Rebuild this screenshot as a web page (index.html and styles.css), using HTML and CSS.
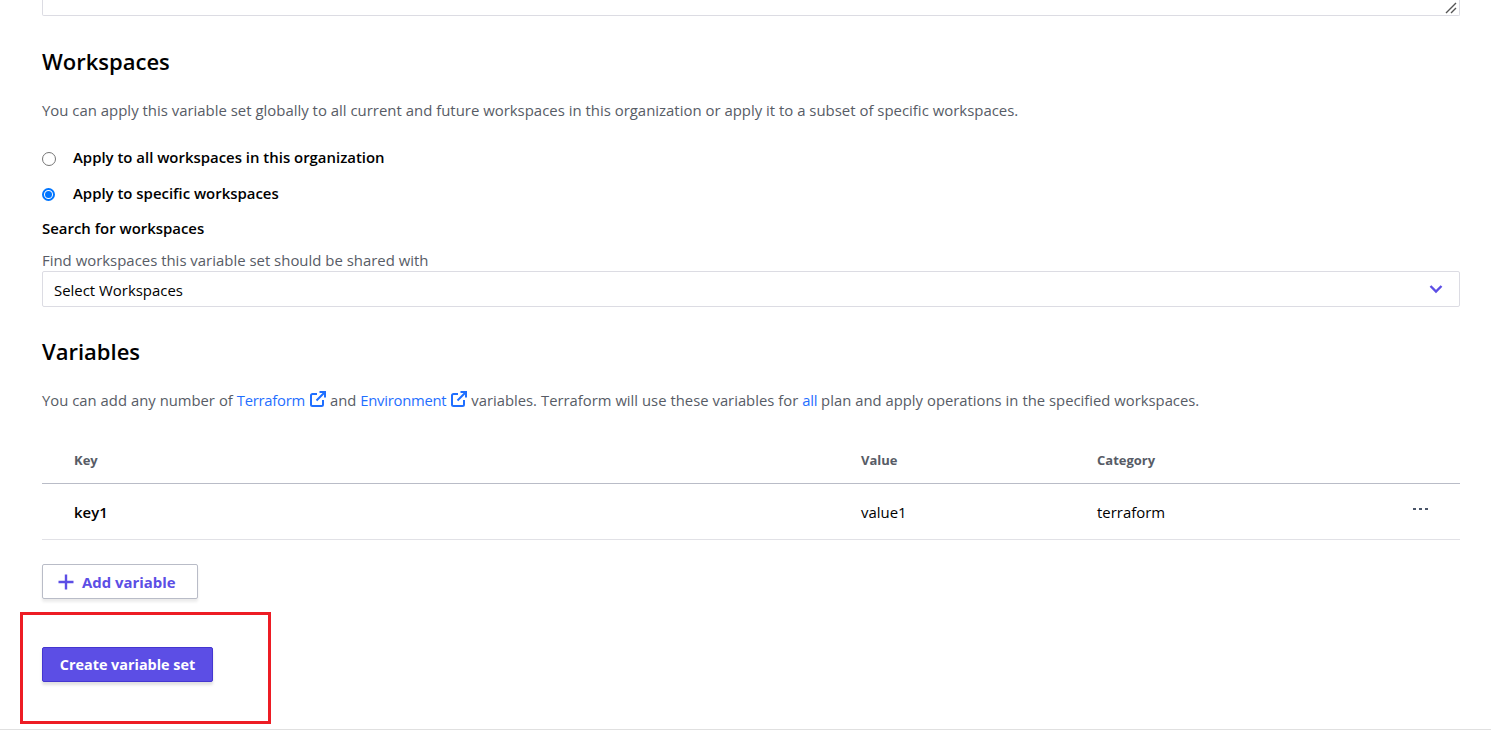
FILE: index.html
```html
<!DOCTYPE html>
<html lang="en">
<head>
    <meta charset="UTF-8">
    <title>Create variable set</title>
    <link rel="stylesheet" href="styles.css">
</head>
<body>
    <main class="content">
        <div class="textarea-end">
            <svg class="grip" width="12" height="12" viewBox="0 0 12 12"><path d="M1 11 11 1M6 11l5-5" stroke="#555" stroke-width="1.4" fill="none"/></svg>
        </div>

        <h2 class="section-title workspaces-title">Workspaces</h2>
        <p class="hint">You can apply this variable set globally to all current and future workspaces in this organization or apply it to a subset of specific workspaces.</p>

        <div class="radio-row first-radio">
            <span class="radio"></span>
            <span class="radio-label">Apply to all workspaces in this organization</span>
        </div>
        <div class="radio-row">
            <span class="radio radio-on"></span>
            <span class="radio-label">Apply to specific workspaces</span>
        </div>

        <div class="field-label">Search for workspaces</div>
        <div class="field-help">Find workspaces this variable set should be shared with</div>
        <div class="select">
            <span class="select-text">Select Workspaces</span>
            <svg width="14" height="10" viewBox="0 0 14 10"><path d="M1.5 2 7 7.5 12.5 2" stroke="#5c4ee5" stroke-width="2.4" fill="none"/></svg>
        </div>

        <h2 class="section-title variables-title">Variables</h2>
        <p class="hint hint-vars">You can add any number of <a class="link">Terraform</a> <svg class="ext" width="16" height="16" viewBox="0 0 16 16"><path d="M7 3H2.5A1.5 1.5 0 0 0 1 4.500V13.500A1.500 1.500 0 0 0 2.500 15H11.500A1.500 1.500 0 0 0 13 13.500V9M6.500 9.500 14.500 1.500M9.500 1H15V6.500" stroke="#1f6fff" stroke-width="2" fill="none"/></svg> and <a class="link">Environment</a> <svg class="ext" width="16" height="16" viewBox="0 0 16 16"><path d="M7 3H2.5A1.5 1.5 0 0 0 1 4.500V13.500A1.500 1.500 0 0 0 2.500 15H11.500A1.500 1.500 0 0 0 13 13.500V9M6.500 9.500 14.500 1.500M9.500 1H15V6.500" stroke="#1f6fff" stroke-width="2" fill="none"/></svg> variables. Terraform will use these variables for <a class="link">all</a> plan and apply operations in the specified workspaces.</p>

        <div class="var-table">
            <div class="var-head">
                <span>Key</span>
                <span>Value</span>
                <span>Category</span>
                <span></span>
            </div>
            <div class="var-row">
                <span class="var-key">key1</span>
                <span>value1</span>
                <span>terraform</span>
                <span class="dots">
                    <i></i><i></i><i></i>
                </span>
            </div>
        </div>

        <button class="btn btn-add" type="button">
            <svg width="16" height="16" viewBox="0 0 16 16"><path d="M8 0.500v15M0.500 8h15" stroke="#5c4ee5" stroke-width="2.4" fill="none"/></svg>
            Add variable
        </button>
        <button class="btn btn-create" type="button">Create variable set</button>
    </main>
    <div class="footer-rule"></div>
    <div class="highlight"></div>
</body>
</html>
```

FILE: styles.css
```css
body {
    margin: 0;
    font-family: "Open Sans", "Noto Sans", sans-serif;
    font-size: 14.93px;
    color: #000;
    background: #fff;
    position: relative;
    height: 745px;
    overflow: hidden;
}
.content {
    padding: 0 31px 0 42px;
}
.textarea-end {
    height: 14px;
    border: 1px solid #dcdce3;
    border-top: none;
    border-radius: 0 0 2px 2px;
    display: flex;
    justify-content: flex-end;
    align-items: flex-end;
    padding-right: 2px;
    padding-bottom: 1px;
}
.section-title {
    font-size: 22px;
    font-weight: 600;
    line-height: 28px;
    margin: 0;
}
.workspaces-title {
    margin-top: 31px;
}
.variables-title {
    margin-top: 30px;
}
.hint {
    margin: 25px 0 0;
    line-height: 20px;
    color: #575c66;
}
.hint-vars {
    font-size: 14.8px;
    word-spacing: 0.15px;
}
.link {
    color: #1f6fff;
    letter-spacing: -0.25px;
}
.ext {
    vertical-align: -1px;
    margin-left: 1px;
}
.radio-row {
    display: flex;
    align-items: center;
    height: 36px;
}
.first-radio {
    margin-top: 20px;
}
.radio {
    width: 12px;
    height: 12px;
    border: 1px solid #767676;
    border-radius: 50%;
    margin-right: 17px;
    margin-top: 2px;
    box-sizing: content-box;
}
.radio-on {
    width: 7px;
    height: 7px;
    border: 2px solid #0075ff;
    padding: 1px;
    margin-right: 18px;
    margin-top: 1px;
    background: #0075ff;
    background-clip: content-box;
}
.radio-label {
    font-weight: 600;
    margin-top: -3px;
}
.field-label {
    font-weight: 600;
    line-height: 20px;
    margin-top: 6px;
}
.field-help {
    line-height: 20px;
    margin-top: 12px;
    color: #575c66;
}
.select {
    height: 34px;
    border: 1px solid #dcdce3;
    border-radius: 2px;
    display: flex;
    align-items: center;
    justify-content: space-between;
    padding: 0 16px 0 11px;
    margin-top: 1px;
}
.select-text {
    margin-top: 2px;
}
.var-table {
    margin-top: 26px;
}
.var-head, .var-row {
    display: grid;
    grid-template-columns: 787px 236px 1fr 47px;
    padding-left: 32px;
    align-items: center;
}
.var-head {
    height: 47px;
    font-size: 13px;
    font-weight: 700;
    color: #575c66;
    border-bottom: 1px solid #b9bcc7;
}
.var-row {
    height: 55px;
    border-bottom: 1px solid #e1e1e6;
}
.var-key {
    font-weight: 600;
}
.dots {
    display: flex;
    gap: 3px;
    margin-top: -6px;
}
.dots i {
    width: 3px;
    height: 2px;
    background: #4a5568;
}
.btn {
    display: flex;
    align-items: center;
    height: 35px;
    font-family: inherit;
    font-size: 14.4px;
    font-weight: 700;
    border-radius: 2px;
    cursor: pointer;
}
.btn-add {
    margin-top: 24px;
    width: 156px;
    padding: 0 0 0 15px;
    gap: 8px;
    font-size: 14.9px;
    color: #5c4ee5;
    background: #fff;
    border: 1px solid #b9bcc7;
    box-shadow: 0 3px 3px rgba(0, 0, 0, 0.08);
}
.btn-create {
    margin-top: 48px;
    width: 171px;
    justify-content: center;
    padding: 0;
    color: #fff;
    background: #5c4ee5;
    border: 1px solid #4436d0;
    box-shadow: 0 3px 3px rgba(0, 0, 0, 0.12);
}
.footer-rule {
    margin-top: 47px;
    height: 1px;
    background: #e0e0e0;
}
.highlight {
    position: absolute;
    left: 20px;
    top: 612px;
    width: 245px;
    height: 106px;
    border: 3px solid #ed1c24;
}
```
